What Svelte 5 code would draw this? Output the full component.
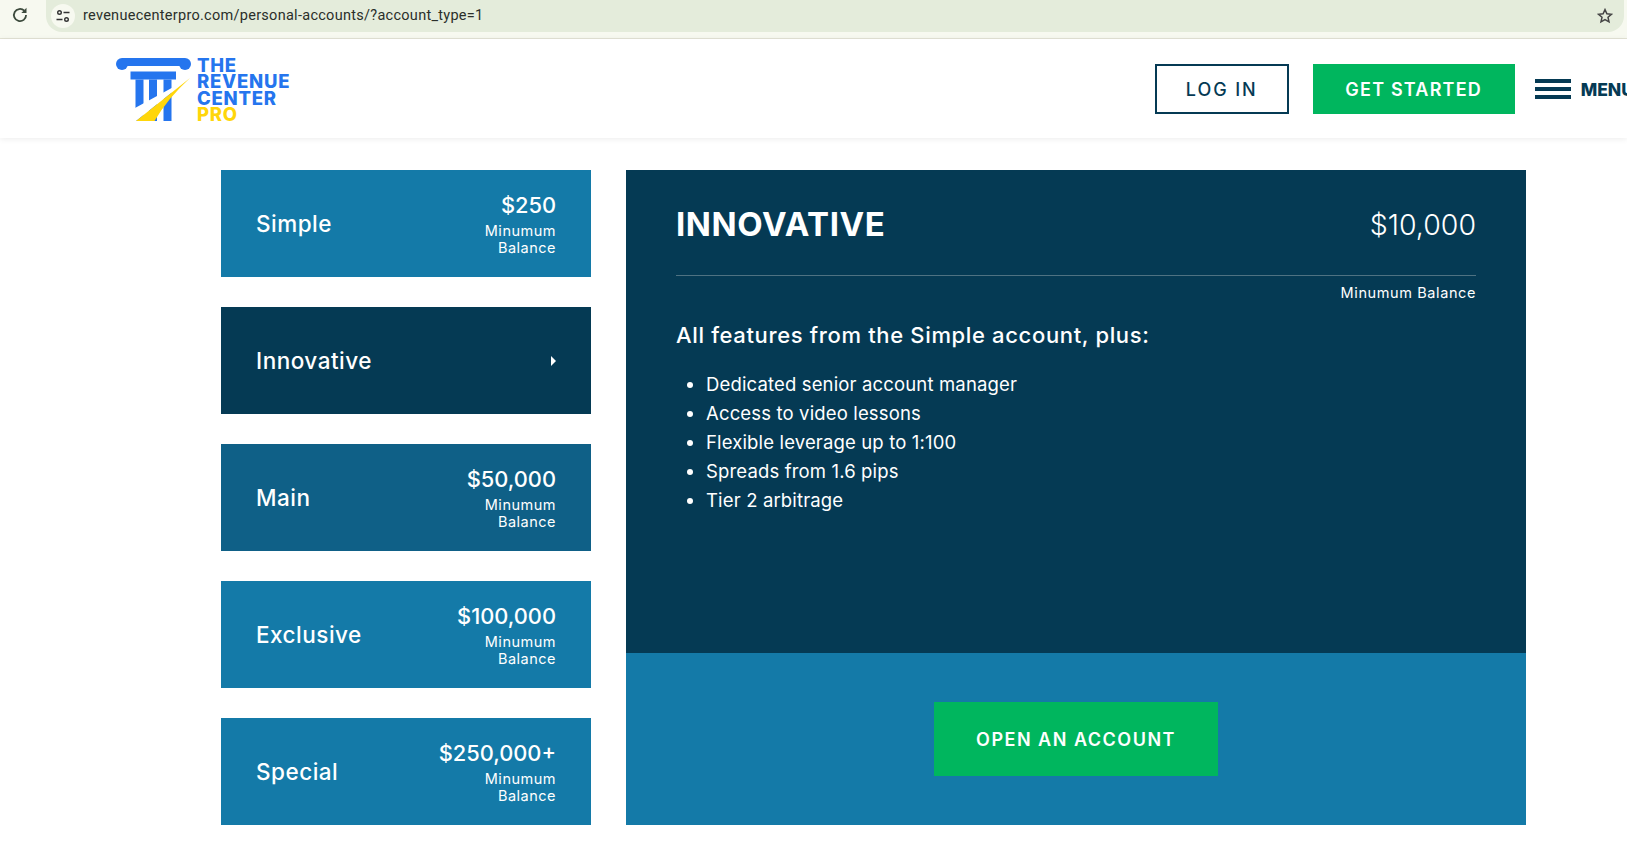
<script>
	const accounts = [
		{ name: 'Simple', price: '$250', tone: 'blue' },
		{ name: 'Innovative', price: '', tone: 'active' },
		{ name: 'Main', price: '$50,000', tone: 'mid' },
		{ name: 'Exclusive', price: '$100,000', tone: 'blue' },
		{ name: 'Special', price: '$250,000+', tone: 'blue' }
	];

	const features = [
		'Dedicated senior account manager',
		'Access to video lessons',
		'Flexible leverage up to 1:100',
		'Spreads from 1.6 pips',
		'Tier 2 arbitrage'
	];
</script>

<div class="page">
	<div class="browser-bar">
		<svg class="reload" viewBox="0 0 16 16" width="18" height="18">
			<path d="M13.4 8a5.4 5.4 0 1 1-1.6-3.8" fill="none" stroke="#3c4a3c" stroke-width="1.6" />
			<path d="M13.8 1.6v4.6H9.2z" fill="#3c4a3c" />
		</svg>
		<div class="address">
			<span class="site-icon">
				<svg viewBox="0 0 16 16" width="16" height="16">
					<circle cx="4.5" cy="4.5" r="1.8" fill="none" stroke="#333" stroke-width="1.4" />
					<path d="M8.5 4.5h6M1.5 11.5h6" stroke="#333" stroke-width="1.5" />
					<circle cx="11.5" cy="11.5" r="1.8" fill="none" stroke="#333" stroke-width="1.4" />
				</svg>
			</span>
			<span class="url">revenuecenterpro.com/personal-accounts/?account_type=1</span>
			<svg class="star" viewBox="0 0 16 16" width="16" height="16">
				<path d="M8 1.6l1.9 4.2 4.5.5-3.4 3 1 4.5L8 11.5l-4 2.3 1-4.5-3.4-3 4.5-.5z" fill="none" stroke="#444" stroke-width="1.5" />
			</svg>
		</div>
	</div>

	<header class="site-header">
		<div class="logo">
			<svg viewBox="0 0 76 64" width="76" height="64">
				<!-- capital -->
				<circle cx="6" cy="6" r="6" fill="#2575ee" />
				<circle cx="69" cy="6" r="6" fill="#2575ee" />
				<rect x="6" y="0" width="63" height="8" fill="#2575ee" />
				<rect x="14.5" y="13.5" width="45.5" height="8" fill="#2575ee" />
				<!-- columns -->
				<rect x="19.5" y="21.5" width="8" height="41.5" fill="#2575ee" />
				<rect x="33" y="21.5" width="8" height="41.5" fill="#2575ee" />
				<rect x="47.5" y="21.5" width="8" height="41.5" fill="#2575ee" />
				<!-- swoosh -->
				<path d="M74 20L19 50V64L20 63z" fill="#fff" />
				<path d="M74 20L20 63H38.5Q52 40 74 20z" fill="#ffd60a" />
			</svg>
			<div class="logo-text">
				<span>THE</span>
				<span>REVENUE</span>
				<span>CENTER</span>
				<span class="pro">PRO</span>
			</div>
		</div>
		<div class="header-actions">
			<button class="login">LOG IN</button>
			<button class="started">GET STARTED</button>
			<div class="menu-toggle">
				<div class="burger"><i></i><i></i><i></i></div>
				<span>MENU</span>
			</div>
		</div>
	</header>

	<main class="accounts">
		<ul class="account-list">
			{#each accounts as account}
				<li class="account-card {account.tone}">
					<span class="account-name">{account.name}</span>
					{#if account.price}
						<div class="account-price">
							<strong>{account.price}</strong>
							<small>Minumum<br />Balance</small>
						</div>
					{:else}
						<span class="arrow"></span>
					{/if}
				</li>
			{/each}
		</ul>

		<section class="details">
			<div class="details-body">
				<div class="details-head">
					<h2>INNOVATIVE</h2>
					<span>$10,000</span>
				</div>
				<p class="min-note">Minumum Balance</p>
				<h3>All features from the Simple account, plus:</h3>
				<ul class="feature-list">
					{#each features as feature}
						<li>{feature}</li>
					{/each}
				</ul>
			</div>
			<div class="details-foot">
				<button class="open">OPEN AN ACCOUNT</button>
			</div>
		</section>
	</main>
</div>

<style>
	:global(body) {
		background: #fff;
		overflow: hidden;
	}

	.page {
		height: 843px;
		overflow: hidden;
		font-family: 'Inter', 'Liberation Sans', sans-serif;
		color: #fff;
	}

	.browser-bar {
		height: 39px;
		box-sizing: border-box;
		background: #f7f9f0;
		border-bottom: 1px solid #e3e3d5;
		display: flex;
		padding: 0 3px 6px 11px;
		gap: 17px;
	}

	.reload {
		margin-top: 6px;
	}

	.address {
		flex: 1;
		background: #e4ecdb;
		border-radius: 0 0 16px 16px;
		display: flex;
		align-items: center;
		padding: 0 11px 0 5px;
	}

	.site-icon {
		width: 24px;
		height: 24px;
		border-radius: 50%;
		background: #f7f9f0;
		display: flex;
		align-items: center;
		justify-content: center;
	}

	.url {
		margin-left: 8px;
		margin-top: -2px;
		font: 14.5px 'Roboto', 'Liberation Sans', sans-serif;
		color: #2a2f2a;
		letter-spacing: 0.28px;
	}

	.star {
		margin-left: auto;
	}

	.site-header {
		height: 99px;
		background: #fff;
		box-shadow: 0 1px 6px rgba(0, 0, 0, 0.08);
		display: flex;
		justify-content: space-between;
		align-items: center;
		padding-left: 116px;
		position: relative;
	}

	.logo {
		display: flex;
		gap: 5px;
		margin-top: 2px;
	}

	.logo svg {
		margin-top: 1.5px;
	}

	.logo-text {
		display: flex;
		flex-direction: column;
		font-size: 18.5px;
		font-weight: 800;
		line-height: 16.5px;
		color: #2575ee;
		letter-spacing: 0.75px;
	}

	.logo-text .pro {
		color: #ffd60a;
	}

	.header-actions {
		display: flex;
		align-items: center;
		margin-right: -7px;
		margin-top: 1px;
	}

	.header-actions button {
		height: 50px;
		border-radius: 0;
		font: 600 18px 'Inter', sans-serif;
		letter-spacing: 1.2px;
	}

	.login {
		width: 134px;
		background: #fff;
		border: 2px solid #053a54;
		color: #053a54;
		font-weight: 500 !important;
		letter-spacing: 1.9px !important;
	}

	.started {
		width: 202px;
		margin-left: 24px;
		border: none;
		background: #00b65e;
		color: #fff;
	}

	.menu-toggle {
		display: flex;
		align-items: center;
		margin-left: 20px;
		gap: 10px;
		color: #053a54;
		font-size: 17.5px;
		font-weight: 800;
	}

	.burger {
		width: 36px;
		display: flex;
		flex-direction: column;
		gap: 4px;
	}

	.burger i {
		display: block;
		height: 4px;
		background: #053a54;
	}

	.accounts {
		display: flex;
		gap: 35px;
		padding: 32px 0 0 221px;
	}

	.account-list {
		list-style: none;
		margin: 0;
		padding: 0;
		width: 370px;
		display: flex;
		flex-direction: column;
		gap: 30px;
	}

	.account-card {
		height: 107px;
		box-sizing: border-box;
		padding: 0 35px;
		display: flex;
		justify-content: space-between;
		align-items: center;
	}

	.account-card.blue {
		background: #147aa8;
	}

	.account-card.mid {
		background: #0f6087;
	}

	.account-card.active {
		background: #053a54;
	}

	.account-name {
		font-size: 22.5px;
		font-weight: 500;
		letter-spacing: 0.5px;
		margin-top: -1px;
	}

	.account-price {
		text-align: right;
		display: flex;
		flex-direction: column;
	}

	.account-price strong {
		font-size: 21.8px;
		font-weight: 500;
		line-height: 26px;
	}

	.account-price small {
		font-size: 14.5px;
		line-height: 17px;
		margin-top: 4px;
		letter-spacing: 0.5px;
	}

	.arrow {
		width: 0;
		height: 0;
		border-left: 5px solid #fff;
		border-top: 5px solid transparent;
		border-bottom: 5px solid transparent;
	}

	.details {
		width: 900px;
		height: 655px;
		display: flex;
		flex-direction: column;
	}

	.details-body {
		height: 483px;
		box-sizing: border-box;
		background: #053a54;
		padding: 0 50px;
	}

	.details-head {
		height: 106px;
		box-sizing: border-box;
		border-bottom: 1px solid #4f7282;
		display: flex;
		justify-content: space-between;
		align-items: flex-start;
		padding-top: 35px;
	}

	.details-head h2 {
		margin: 0;
		font-size: 33px;
		font-weight: 700;
		line-height: 38px;
		letter-spacing: 0.6px;
	}

	.details-head span {
		font-size: 28.5px;
		font-weight: 300;
		line-height: 38px;
		margin-top: 1px;
	}

	.min-note {
		margin: 8px 0 0;
		text-align: right;
		font-size: 14.5px;
		line-height: 18px;
		letter-spacing: 0.6px;
	}

	h3 {
		margin: 19px 0 0;
		font-size: 22px;
		font-weight: 500;
		line-height: 28px;
		letter-spacing: 0.65px;
	}

	.feature-list {
		margin: 21px 0 0;
		padding-left: 30px;
		font-size: 18.5px;
		line-height: 29px;
		letter-spacing: 0.15px;
	}

	.details-foot {
		flex: 1;
		background: #147aa8;
		display: flex;
		align-items: center;
		justify-content: center;
	}

	.open {
		width: 284px;
		height: 74px;
		border: none;
		background: #00b65e;
		color: #fff;
		font: 600 18px 'Inter', sans-serif;
		letter-spacing: 1.5px;
	}
</style>
